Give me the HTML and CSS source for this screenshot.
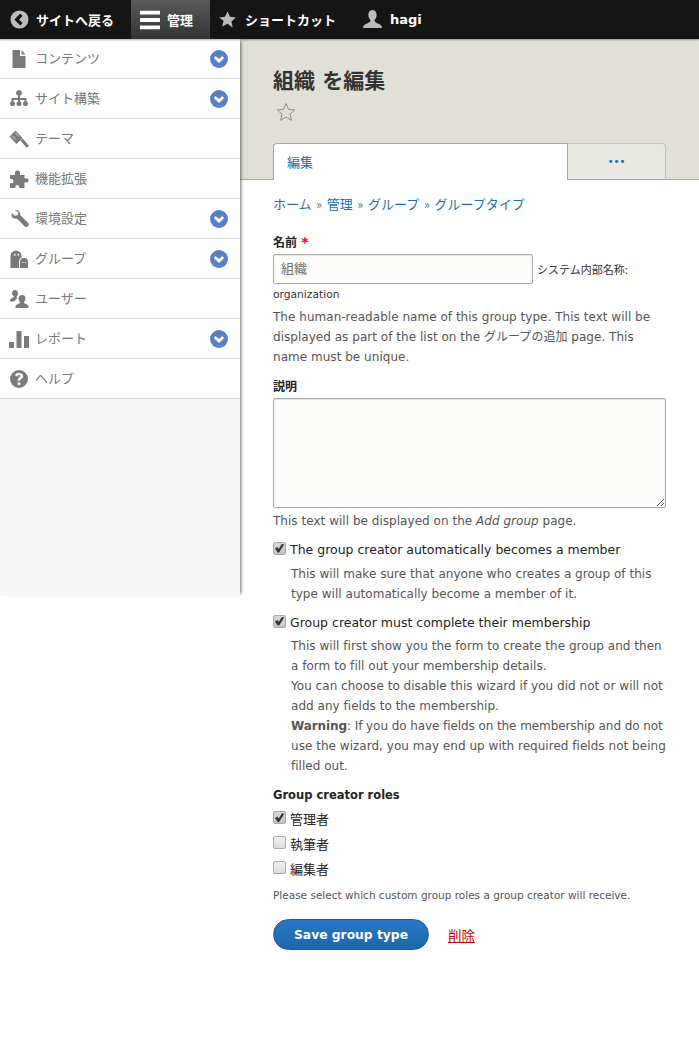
FILE: index.html
```html
<!DOCTYPE html>
<html lang="ja">
<head>
<meta charset="utf-8">
<title>組織 を編集</title>
<link rel="stylesheet" href="styles.css">
</head>
<body>
<nav class="toolbar">
  <a class="tb-item tb-back"><svg class="tb-ico" viewBox="0 0 20 20"><circle cx="10" cy="10" r="9.500" fill="#bbb"/><path d="M12 5L7 10l5 5" fill="none" stroke="#151515" stroke-width="3.400"/></svg>サイトへ戻る</a>
  <a class="tb-item tb-active"><svg class="tb-ico-menu" viewBox="0 0 20 20"><path d="M1 .8h18a1 1 0 0 1 0 3.800H1a1 1 0 0 1 0-3.800zM1 8.100h18a1 1 0 0 1 0 3.800H1a1 1 0 0 1 0-3.800zM1 15.400h18a1 1 0 0 1 0 3.800H1a1 1 0 0 1 0-3.800z" fill="#fff"/></svg>管理</a>
  <a class="tb-item tb-short"><svg class="tb-ico" viewBox="0 0 20 20"><path d="M10 .5l2.900 6.400 6.900.8-5.100 4.700 1.400 6.900L10 15l-6.100 3.300 1.400-6.900L.2 7.700l6.900-.8z" fill="#bbb"/></svg>ショートカット</a>
  <a class="tb-item tb-user"><svg class="tb-ico" viewBox="0 0 20 20"><path d="M10 0c3 0 4.400 2.300 4.400 5 0 2.300-1 4.400-2.200 5.600-.3 1.400.6 2.300 2.400 3 2.300.9 4.600 1.800 5.300 4.100l.1 1.300H0l.1-1.300c.7-2.300 3-3.200 5.300-4.100 1.800-.7 2.700-1.600 2.400-3C6.600 9.400 5.600 7.300 5.600 5 5.600 2.300 7 0 10 0z" fill="#bbb"/></svg>hagi</a>
</nav>
<div class="layout">
  <aside class="sidebar">
    <ul class="menu">
      <li class="menu-item"><svg class="m-ico" viewBox="0 0 20 20"><path d="M3.500 1h7.500v6h5.500v12h-13zM12.500 1l4 4.500h-4z" fill="#7a7a7a"/></svg><span class="m-label">コンテンツ</span><svg class="m-arrow" viewBox="0 0 18 18"><circle cx="9" cy="9" r="9" fill="#5580c8"/><path d="M4.800 7l4.200 4 4.200-4" fill="none" stroke="#fff" stroke-width="2.800"/></svg></li>
      <li class="menu-item"><svg class="m-ico" viewBox="0 0 20 20"><path d="M10 1a3 3 0 0 1 1 5.800V9h6.500v3.300a2.500 2.500 0 1 1-2 0V11H11v1.300a2.500 2.500 0 1 1-2 0V11H4.500v1.300a2.500 2.500 0 1 1-2 0V9H9V6.800A3 3 0 0 1 10 1z" fill="#7a7a7a"/></svg><span class="m-label">サイト構築</span><svg class="m-arrow" viewBox="0 0 18 18"><circle cx="9" cy="9" r="9" fill="#5580c8"/><path d="M4.800 7l4.200 4 4.200-4" fill="none" stroke="#fff" stroke-width="2.800"/></svg></li>
      <li class="menu-item"><svg class="m-ico" viewBox="0 0 20 20"><path d="M.5 7.500L6.500 1.500 13.500 9 7.500 15z" fill="#7a7a7a"/><path d="M3 6.500L7 10.500M6 3.500L10 7.500" stroke="#fff" stroke-width=".7"/><path d="M12.500 10.500L18.800 17.800" stroke="#7a7a7a" stroke-width="3" fill="none"/></svg><span class="m-label">テーマ</span></li>
      <li class="menu-item"><svg class="m-ico" viewBox="0 0 20 20"><path d="M1 6h5C5.500 3 6.500 1.500 8.500 1.500S11.500 3 11 6h4.500v3.500c2.500-.8 4-.2 4 1.800s-1.500 2.800-4 2V19H10c.6-2-.2-3-1.800-3S6 17 6.500 19H1v-5c2 .8 3.500 0 3.500-1.800S3 9.500 1 10.300z" fill="#7a7a7a"/></svg><span class="m-label">機能拡張</span></li>
      <li class="menu-item"><svg class="m-ico" viewBox="0 0 20 20"><path d="M6 1.500c2.500-1 5.500 1 5.300 4 0 .5 0 .8.300 1.100l7.400 7.200c1 1.100 1 2.500 0 3.500s-2.500 1-3.500 0L8.300 10c-.4-.3-.7-.4-1.200-.3-3 .3-5.500-2.500-4.300-5.700l3 2.800 3-.8.700-2.700z" fill="#7a7a7a"/></svg><span class="m-label">環境設定</span><svg class="m-arrow" viewBox="0 0 18 18"><circle cx="9" cy="9" r="9" fill="#5580c8"/><path d="M4.800 7l4.200 4 4.200-4" fill="none" stroke="#fff" stroke-width="2.800"/></svg></li>
      <li class="menu-item"><svg class="m-ico" viewBox="0 0 20 20"><path d="M1.500 19V7a5.500 5.500 0 0 1 11 0v1.500A4.500 4.500 0 0 0 10 13v6z" fill="#7a7a7a"/><path d="M11 19v-6a4 4 0 0 1 8 0v6z" fill="#7a7a7a"/><path d="M5 5h1.500v1.500H5zM8.500 5H10v1.500H8.500zM13.500 13h1v1h-1zM16 13h1v1h-1z" fill="#fff"/></svg><span class="m-label">グループ</span><svg class="m-arrow" viewBox="0 0 18 18"><circle cx="9" cy="9" r="9" fill="#5580c8"/><path d="M4.800 7l4.200 4 4.200-4" fill="none" stroke="#fff" stroke-width="2.800"/></svg></li>
      <li class="menu-item"><svg class="m-ico" viewBox="0 0 20 20"><path d="M6 1c2 0 3 1.500 3 3.200 0 1.500-.7 2.700-1.400 3.500-.2.800.2 1.300 1 1.700-1.500.8-2.600 1.500-3.300 3H1v-1.500c.5-1.500 2.500-1.800 3.500-2.600.4-.4.500-.7.300-1.400C4 6.900 3 5.700 3 4.200 3 2.500 4 1 6 1zM13.500 6c2 0 3 1.500 3 3.300 0 1.500-.7 2.900-1.500 3.700-.2.900.3 1.300 1.300 1.800 1.300.6 2.900 1 3.200 2.500V19H6.500v-1.700c.3-1.500 1.900-1.900 3.200-2.500 1-.5 1.500-.9 1.300-1.800-.8-.8-1.500-2.200-1.500-3.700 0-1.800 1-3.300 4-3.300z" fill="#7a7a7a"/></svg><span class="m-label">ユーザー</span></li>
      <li class="menu-item"><svg class="m-ico" viewBox="0 0 20 20"><path d="M0 13h5v6H0zM7.500 2h5v17h-5zM15 7h5v12h-5z" fill="#7a7a7a"/></svg><span class="m-label">レポート</span><svg class="m-arrow" viewBox="0 0 18 18"><circle cx="9" cy="9" r="9" fill="#5580c8"/><path d="M4.800 7l4.200 4 4.200-4" fill="none" stroke="#fff" stroke-width="2.800"/></svg></li>
      <li class="menu-item"><svg class="m-ico" viewBox="0 0 20 20"><path fill-rule="evenodd" d="M10 1a9 9 0 1 1 0 18 9 9 0 0 1 0-18zM8.700 13.500v2.600h2.600v-2.600zM10 3.800c-2.300 0-3.800 1.200-4 3.300l2.400.3c.1-1 .7-1.500 1.500-1.500s1.400.4 1.400 1.100c0 .6-.4 1-1.200 1.600-1 .8-1.400 1.500-1.400 2.700v.5h2.500v-.3c0-.6.200-1 1-1.500 1.200-.9 2-1.700 2-3.100 0-1.900-1.700-2.900-4.200-2.900z" fill="#7a7a7a"/></svg><span class="m-label">ヘルプ</span></li>
    </ul>
  </aside>
  <main class="main">
    <header class="page-head">
      <h1 class="page-title">組織 を編集</h1>
      <svg class="fav-star" viewBox="0 0 20 20"><path d="M10 1.500l2.500 5.800 6.300.6-4.800 4.200 1.400 6.200-5.400-3.300-5.400 3.300L6 12.100 1.200 7.900l6.300-.6z" fill="none" stroke="#8f8f85" stroke-width="1"/></svg>
      <div class="tabs">
        <a class="tab tab-active">編集</a>
        <a class="tab tab-more">•••</a>
      </div>
    </header>
    <div class="content">
      <div class="breadcrumb"><a>ホーム</a> <span class="sep">»</span> <a>管理</a> <span class="sep">»</span> <a>グループ</a> <span class="sep">»</span> <a>グループタイプ</a></div>
      <form class="form">
        <label class="f-label lb-name">名前 <span class="req">*</span></label>
        <div class="name-row"><input class="text-input" type="text" value="組織"><span class="machine">システム内部名称:</span></div>
        <div class="machine-val">organization</div>
        <p class="desc d-name">The human-readable name of this group type. This text will be displayed as part of the list on the グループの追加 page. This name must be unique.</p>
        <label class="f-label lb-desc">説明</label>
        <textarea class="area"></textarea>
        <p class="desc d-area">This text will be displayed on the <em>Add group</em> page.</p>
        <div class="check c-first"><input type="checkbox" class="cb" checked><span class="c-label">The group creator automatically becomes a member</span></div>
        <p class="desc c-desc c-desc-first">This will make sure that anyone who creates a group of this type will automatically become a member of it.</p>
        <div class="check c-second"><input type="checkbox" class="cb" checked><span class="c-label">Group creator must complete their membership</span></div>
        <p class="desc c-desc">This will first show you the form to create the group and then a form to fill out your membership details.<br>You can choose to disable this wizard if you did not or will not add any fields to the membership.<br><span class="warn-line"><strong>Warning</strong>: If you do have fields on the membership and do not</span> use the wizard, you may end up with required fields not being filled out.</p>
        <div class="roles-title">Group creator roles</div>
        <div class="role"><input type="checkbox" class="cb" checked><span class="c-label">管理者</span></div>
        <div class="role"><input type="checkbox" class="cb"><span class="c-label">執筆者</span></div>
        <div class="role"><input type="checkbox" class="cb"><span class="c-label">編集者</span></div>
        <p class="small">Please select which custom group roles a group creator will receive.</p>
        <div class="actions"><button type="button" class="save">Save group type</button><a class="del">削除</a></div>
      </form>
    </div>
  </main>
</div>
</body>
</html>
```
FILE: styles.css
```css
* { box-sizing: border-box; }
html, body { margin: 0; padding: 0; background: #fff; }
body { font-family: "DejaVu Sans", "Noto Sans CJK JP", sans-serif; font-size: 12px; color: #333; height: 1044px; overflow: hidden; }
.toolbar { display: flex; height: 39px; background: #151515; color: #fff; font-weight: 700; font-size: 13px; position: relative; z-index: 3; box-shadow: 0 1px 2px rgba(0,0,0,.35); }
.tb-item { display: flex; align-items: center; height: 39px; white-space: nowrap; }
.tb-back { width: 131px; padding-left: 10px; }
.tb-active { width: 79px; padding-left: 9px; background: linear-gradient(#5a5a5a, #333); }
.tb-short { width: 126px; padding-left: 9px; }
.tb-short .tb-ico { margin-right: 9px; }
.tb-user { padding-left: 27px; }
.tb-user .tb-ico { margin-right: 8px; }
.tb-ico { width: 19px; height: 19px; margin-right: 7px; }
.tb-ico-menu { width: 20px; height: 20px; margin-right: 7px; }
.layout { display: grid; grid-template-columns: 240px 1fr; align-items: start; }
.sidebar { height: 557px; background: #f5f5f5; box-shadow: 3px 0 3px -2px rgba(0,0,0,.55); position: relative; z-index: 2; }
.menu { list-style: none; margin: 0; padding: 0; }
.menu-item { display: flex; align-items: center; height: 40px; background: #fff; border-bottom: 1px solid #d9d9d9; padding: 0 12px 0 9px; font-size: 13px; color: #777; font-family: "Noto Sans CJK JP", sans-serif; }
.m-ico { width: 20px; height: 20px; margin-right: 7px; flex: none; }
.m-label { flex: 1; margin: -2px 0 0 -1px; }
.m-arrow { width: 18px; height: 18px; flex: none; }
.main { min-width: 0; }
.page-head { height: 141px; background: #e0e0d8; border-bottom: 1px solid #a6a6a6; padding: 27px 33px 0; position: relative; }
.page-title { margin: 0; font-size: 21px; line-height: 30px; font-weight: 700; color: #333; }
.fav-star { display: block; width: 20px; height: 20px; margin: 6px 0 0 3px; }
.tabs { display: flex; position: absolute; left: 33px; right: 33px; bottom: -1px; height: 37px; }
.tab { display: flex; align-items: center; font-size: 13px; color: #0f6db6; font-family: "Noto Sans CJK JP", sans-serif; border: 1px solid #a6a6a6; border-radius: 4px 4px 0 0; }
.tab-active { width: 294px; background: #fff; padding-left: 13px; border-bottom: 1px solid #fff; border-right: 0; border-top-right-radius: 0; }
.tab-more { flex: 1; background: #e9e9e4; justify-content: center; font-family: "DejaVu Sans", sans-serif; font-size: 10px; border-right-color: #bfbfbf; border-top-color: #bfbfbf; border-top-left-radius: 0; }
.content { padding: 14px 33px 0; }
.breadcrumb { font-size: 13px; line-height: 20px; color: #1d6fb8; font-family: "Noto Sans CJK JP", sans-serif; white-space: nowrap; }
.sep { color: #666; font-size: 12px; margin: 0 1.800px; }
.form { display: block; }
.f-label { display: block; font-weight: 700; font-size: 12px; line-height: 17px; color: #222; }
.lb-name { margin-top: 20px; }
.req { color: #e00; font-size: 14px; }
.name-row { display: flex; align-items: center; margin-top: 2px; }
.text-input { width: 260px; height: 30px; border: 1px solid #a9a9a9; border-radius: 2px; background: #fcfcfa; padding: 0 7px 3px; font-size: 13px; color: #7d7060; font-family: "Noto Sans CJK JP", sans-serif; box-shadow: inset 0 1px 1px rgba(0,0,0,.08); }
.machine { margin-left: 4px; font-size: 11px; font-family: "Noto Sans CJK JP", sans-serif; color: #333; }
.machine-val { font-size: 10.700px; line-height: 20px; margin-top: 1px; color: #333; }
.desc { margin: 0; font-size: 12px; line-height: 20px; letter-spacing: .03px; color: #555; }
.warn-line { letter-spacing: -.08px; }
.d-name { margin-top: 2px; }
.lb-desc { margin-top: 12px; }
.area { display: block; width: 393px; height: 110px; margin-top: 2px; border: 1px solid #a9a9a9; border-radius: 2px; background: #fcfcfa; box-shadow: inset 0 1px 1px rgba(0,0,0,.1); }
.d-area { margin-top: 3px; }
.check { display: flex; align-items: center; height: 20px; }
.c-first { margin-top: 8px; }
.c-second { margin-top: 8px; }
.cb { appearance: none; width: 13px; height: 13px; margin: -2px 4px 0 0; flex: none; position: relative; border: 1px solid #a8a8a8; border-radius: 2px; background: linear-gradient(#f2f2f2, #dcdcdc); }
.cb:checked { background: linear-gradient(#d8d8d8, #c4c4c4); }
.cb:checked::before { content: ""; position: absolute; left: 1px; top: 1px; width: 9px; height: 9px; background: #333; clip-path: polygon(0 55%, 28% 40%, 42% 62%, 80% 0, 100% 15%, 45% 100%, 30% 100%); }
.c-label { font-size: 12.500px; color: #222; }
.c-desc { margin-left: 18px; margin-top: 4px; }
.c-desc-first { margin-top: 5px; }
.roles-title { margin-top: 9px; margin-bottom: 1px; font-weight: 700; font-size: 11.500px; line-height: 20px; color: #222; }
.role { display: flex; align-items: center; height: 25px; }
.role .c-label { font-family: "Noto Sans CJK JP", sans-serif; font-size: 13px; }
.small { margin: 4px 0 0; font-size: 10.500px; line-height: 20px; color: #555; }
.actions { display: flex; align-items: center; margin-top: 14px; }
.save { width: 156px; height: 31px; border: 1px solid #1e5c99; border-radius: 16px; background: linear-gradient(#2a78c4, #1b66ae); color: #fff; font-weight: 700; font-size: 12.300px; font-family: "DejaVu Sans", sans-serif; padding: 0; }
.del { margin-left: 19px; color: #c00; text-decoration: underline; font-size: 13.500px; font-family: "Noto Sans CJK JP", sans-serif; }
```
